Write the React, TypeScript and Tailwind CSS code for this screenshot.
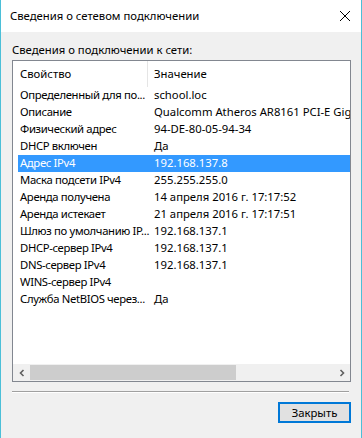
import React from "react";

const rows: [string, string][] = [
  ["Определенный для по...", "school.loc"],
  ["Описание", "Qualcomm Atheros AR8161 PCI-E Gigabit Ethernet Controller"],
  ["Физический адрес", "94-DE-80-05-94-34"],
  ["DHCP включен", "Да"],
  ["Адрес IPv4", "192.168.137.8"],
  ["Маска подсети IPv4", "255.255.255.0"],
  ["Аренда получена", "14 апреля 2016 г. 17:17:52"],
  ["Аренда истекает", "21 апреля 2016 г. 17:17:51"],
  ["Шлюз по умолчанию IP...", "192.168.137.1"],
  ["DHCP-сервер IPv4", "192.168.137.1"],
  ["DNS-сервер IPv4", "192.168.137.1"],
  ["WINS-сервер IPv4", ""],
  ["Служба NetBIOS через...", "Да"],
];

export default function App() {
  return (
    <div
      className="w-[362px] h-[438px] flex flex-col border-x border-[#4bbfd8] bg-[#f0f0f0] text-[11.3px] text-black overflow-hidden"
      style={{ fontFamily: '"Noto Sans", "Open Sans", sans-serif' }}
    >
      {/* title bar */}
      <div className="h-[32px] bg-white flex items-center justify-between pl-[9px] pr-[8px] shrink-0">
        <span className="leading-none">Сведения о сетевом подключении</span>
        <svg width="12" height="12" viewBox="0 0 12 12" className="mr-[2px]">
          <path d="M1 1 L11 11 M11 1 L1 11" stroke="#000" strokeWidth="1" fill="none" />
        </svg>
      </div>

      <div className="flex-1 flex flex-col pl-[11px] pr-[10px]">
        <div className="pt-[10px] h-[28px] leading-[16px]">Сведения о подключении к сети:</div>

        {/* list box */}
        <div className="h-[322px] border border-[#828790] bg-white flex flex-col overflow-hidden">
          <div className="h-[26px] flex items-center shrink-0">
            <div className="w-[135px] pl-[7px] h-full flex items-center border-r border-[#e5e5e5]">Свойство</div>
            <div className="pl-[6px]">Значение</div>
          </div>
          <div className="flex flex-col pl-[5px] pr-0">
            {rows.map(([k, v], i) => {
              const sel = i === 4;
              return (
                <div
                  key={i}
                  className={
                    "h-[17px] flex items-center whitespace-nowrap overflow-hidden " +
                    (sel ? "bg-[#3399ff] text-white" : "")
                  }
                >
                  <div className="w-[136px] pl-[2px] shrink-0 overflow-hidden tracking-[-0.35px]">{k}</div>
                  <div className="shrink-0">{v}</div>
                </div>
              );
            })}
          </div>
          <div className="flex-1" />
          {/* horizontal scrollbar */}
          <div className="h-[17px] bg-[#f0f0f0] flex items-stretch shrink-0">
            <div className="w-[17px] flex items-center justify-center">
              <svg width="8" height="8" viewBox="0 0 8 8">
                <path d="M5.5 1 L2.5 4 L5.5 7" stroke="#606060" strokeWidth="1.6" fill="none" />
              </svg>
            </div>
            <div className="w-[206px] bg-[#cdcdcd] my-[1px]" />
            <div className="flex-1" />
            <div className="w-[17px] flex items-center justify-center">
              <svg width="8" height="8" viewBox="0 0 8 8">
                <path d="M2.5 1 L5.5 4 L2.5 7" stroke="#606060" strokeWidth="1.6" fill="none" />
              </svg>
            </div>
          </div>
        </div>

        {/* separator */}
        <div className="mt-[9px] h-[1px] bg-[#a0a0a0] mr-[2px]" />
        <div className="h-[1px] bg-white mr-[2px]" />

        <div className="flex justify-end mt-[9px]">
          <button className="w-[73px] h-[21px] border-2 border-[#0078d7] bg-[#e1e1e1] flex items-center justify-center leading-none">
            Закрыть
          </button>
        </div>
      </div>
    </div>
  );
}
